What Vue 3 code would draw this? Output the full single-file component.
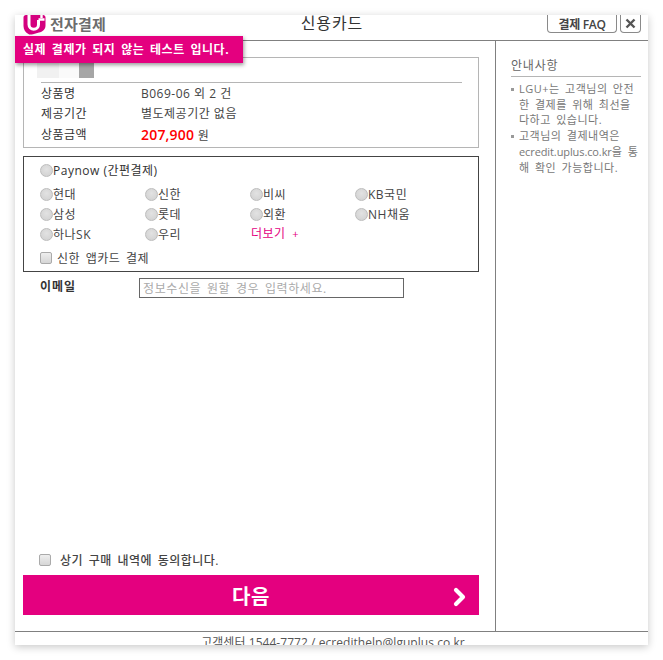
<template>
  <div class="page">
    <div class="popup">
      <header class="top">
        <div class="logo">
          <svg width="24" height="20" viewBox="0 0 24 20">
            <path d="M3 0h17c1.500 0 2.500 1 2.500 2.500v8c0 4-3 6.500-6.500 7l-6 1.800c-3 .6-4 .2-5-.6-2.500-1.500-4.500-4-4.500-7.700V2.500C.5 1 1.500 0 3 0z" fill="#d4007f" />
            <path d="M6 0v9.500c0 3 2.200 4.700 4.800 4.700s4.700-1.700 4.700-4.700V5" fill="none" stroke="#fff" stroke-width="3" />
            <path d="M15.500 4.500h6M18.500 0v3" fill="none" stroke="#fff" stroke-width="2.400" />
          </svg>
          <span>전자결제</span>
        </div>
        <h1>신용카드</h1>
        <div class="top-btns">
          <button class="faq">결제 FAQ</button>
          <button class="close">
            <svg width="11" height="11" viewBox="0 0 11 11">
              <path d="M1.500 1.500l8 8M9.500 1.500l-8 8" stroke="#555" stroke-width="2.400" />
            </svg>
          </button>
        </div>
      </header>

      <div class="notice">실제 결제가 되지 않는 테스트 입니다.</div>

      <div class="body">
        <main class="left">
          <section class="product">
            <div class="blur"><i class="b1"></i><i class="b2"></i><i class="b3"></i></div>
            <dl v-for="row in productRows" :key="row.label" class="prow">
              <dt>{{ row.label }}</dt>
              <dd>{{ row.value }}</dd>
            </dl>
            <dl class="prow">
              <dt>상품금액</dt>
              <dd><b class="price">207,900</b> 원</dd>
            </dl>
          </section>

          <section class="pay">
            <label class="paynow"><input type="radio" name="card" />Paynow (간편결제)</label>
            <div class="cards">
              <label v-for="card in cards" :key="card"><input type="radio" name="card" />{{ card }}</label>
              <a class="more">더보기 <small>+</small></a>
            </div>
            <label class="appcard"><input type="checkbox" />신한 앱카드 결제</label>
          </section>

          <div class="email">
            <label for="mail">이메일</label>
            <input id="mail" type="text" placeholder="정보수신을 원할 경우 입력하세요." />
          </div>

          <label class="agree"><input type="checkbox" />상기 구매 내역에 동의합니다.</label>

          <button class="next">
            다음
            <svg class="arrow" width="14" height="20" viewBox="0 0 14 20">
              <path d="M3 3L10 10l-7 7" fill="none" stroke="#fff" stroke-width="4.200" stroke-linecap="round" stroke-linejoin="round" />
            </svg>
          </button>
        </main>

        <aside class="side">
          <h2>안내사항</h2>
          <ul>
            <li>LGU+는 고객님의 안전한 결제를 위해 최선을 다하고 있습니다.</li>
            <li>고객님의 결제내역은 <span class="url">ecredit.uplus.co.kr</span>을 통해 확인 가능합니다.</li>
          </ul>
        </aside>
      </div>

      <footer class="bottom">고객센터 1544-7772 / ecredithelp@lguplus.co.kr</footer>
    </div>
  </div>
</template>

<script setup>
const productRows = [
  { label: '상품명', value: 'B069-06 외 2 건' },
  { label: '제공기간', value: '별도제공기간 없음' }
]

const cards = ['현대', '신한', '비씨', 'KB국민', '삼성', '롯데', '외환', 'NH채움', '하나SK', '우리']
</script>

<style>
html, body { margin: 0; background: #fff; }
</style>

<style scoped>
.page {
  width: 663px;
  height: 660px;
  padding: 15px;
  box-sizing: border-box;
  font-family: "Open Sans", "Noto Sans CJK KR", sans-serif;
  font-size: 12px;
  letter-spacing: .5px;
  word-spacing: 2px;
  color: #444;
}

.popup {
  position: relative;
  width: 633px;
  height: 630px;
  background: #fff;
  box-shadow: 0 2px 8px rgba(0, 0, 0, .22);
  overflow: hidden;
  display: flex;
  flex-direction: column;
}

.top {
  height: 25px;
  flex: none;
  display: flex;
  justify-content: space-between;
  border-bottom: 1px solid #808080;
  position: relative;
}

.logo {
  display: flex;
  align-items: flex-start;
  gap: 3px;
  padding-left: 8px;
  font-family: "Noto Sans CJK KR", sans-serif;
  font-size: 15px;
  font-weight: 700;
  letter-spacing: .2px;
  color: #6d6d6d;
  line-height: 18px;
}

.top h1 {
  position: absolute;
  left: 1px;
  right: 0;
  top: 0;
  margin: 0;
  text-align: center;
  font-size: 16px;
  font-weight: 400;
  line-height: 17px;
  color: #333;
  letter-spacing: .9px;
}

.top-btns {
  display: flex;
  gap: 3px;
  padding-right: 7px;
  height: 18px;
  position: relative;
}

.top-btns button {
  height: 18px;
  padding: 0;
  background: #fff;
  border: 1px solid #8a8a8a;
  border-top: 0;
  border-radius: 0 0 4px 4px;
  font-family: inherit;
  color: #444;
}

.faq {
  width: 70px;
  font-size: 12px;
  font-weight: 600;
  letter-spacing: -.3px;
  word-spacing: 0;
}

.close {
  width: 21px;
  display: flex;
  align-items: center;
  justify-content: center;
}

.notice {
  position: absolute;
  left: 0;
  top: 21px;
  width: 228px;
  height: 27px;
  box-sizing: border-box;
  padding-left: 8px;
  background: #e4007f;
  color: #fff;
  font-size: 12px;
  font-weight: 700;
  line-height: 27px;
  letter-spacing: .55px;
  box-shadow: 1px 2px 4px rgba(0, 0, 0, .4);
  z-index: 2;
}

.body {
  flex: none;
  height: 591px;
  display: flex;
  border-bottom: 1px solid #808080;
  box-sizing: border-box;
}

.left {
  width: 481px;
  box-sizing: border-box;
  border-right: 1px solid #808080;
  padding: 16px 16px 0 8px;
  display: flex;
  flex-direction: column;
}

.product {
  height: 91px;
  box-sizing: border-box;
  border: 1px solid #b5b5b5;
  padding: 4px 16px 0 17px;
}

.blur {
  display: flex;
  height: 20px;
  margin-left: -4px;
}

.blur i { display: block; height: 16px; }
.b1 { width: 22px; background: #f1f1f1; }
.b2 { width: 20px; background: #fafafa; }
.b3 { width: 15px; background: #a6a6a6; }

.product .blur + .prow {
  border-top: 1px solid #b5b5b5;
  margin-top: 0;
  height: 20px;
}

.prow {
  display: flex;
  margin: 0;
  height: 21px;
  line-height: 21px;
}

.prow dt { width: 100px; color: #333; }
.prow dd { margin: 0; word-spacing: 0; }

.price {
  color: #f00;
  font-size: 14px;
  font-weight: 600;
  letter-spacing: .2px;
}

.pay {
  margin-top: 8px;
  height: 116px;
  box-sizing: border-box;
  border: 1px solid #444;
  padding: 4px 0 0 16px;
}

.pay input[type="radio"] {
  appearance: none;
  width: 13px;
  height: 13px;
  margin: 0;
  border-radius: 50%;
  border: 1px solid #bdbdbd;
  background: radial-gradient(circle at 50% 40%, #e2e2e2, #cfcfcf);
  flex: none;
}

.paynow,
.cards label,
.appcard,
.agree {
  display: flex;
  align-items: center;
}

.paynow {
  height: 18px;
  color: #333;
  word-spacing: 0;
}

.cards {
  display: grid;
  grid-template-columns: repeat(4, 105px);
  grid-auto-rows: 20px;
  margin-top: 5px;
}

.more {
  color: #e4007f;
  padding-left: 1px;
  line-height: 20px;
  word-spacing: 0;
}

.more small {
  font-size: 11px;
  margin-left: 3px;
}

input[type="checkbox"] {
  appearance: none;
  width: 12px;
  height: 12px;
  margin: 0;
  border: 1px solid #aaa;
  border-radius: 2px;
  background: linear-gradient(#eee, #d6d6d6);
  flex: none;
}

.appcard {
  gap: 5px;
  margin-top: 4px;
  height: 20px;
}

.email {
  display: flex;
  align-items: flex-start;
  margin-top: 6px;
  padding-left: 17px;
}

.email label {
  width: 99px;
  font-weight: 600;
  color: #333;
  line-height: 17px;
  letter-spacing: .9px;
}

.email input {
  width: 265px;
  height: 20px;
  box-sizing: border-box;
  border: 1px solid #666;
  padding: 0 3px;
  font-family: inherit;
  font-size: 12px;
  letter-spacing: .6px;
  word-spacing: 2px;
  outline: none;
}

.email input::placeholder { color: #aaa; }

.agree {
  margin-top: auto;
  gap: 9px;
  padding-left: 16px;
  height: 18px;
  font-weight: 500;
  color: #444;
}

.next {
  position: relative;
  margin: 6px 0 16px;
  height: 40px;
  flex: none;
  border: 0;
  padding: 0;
  background: #e4007f;
  color: #fff;
  font-family: inherit;
  font-size: 20px;
  font-weight: 700;
  letter-spacing: .5px;
}

.arrow {
  position: absolute;
  right: 12px;
  top: 12px;
}

.side {
  flex: 1;
  padding: 17px 7px 0 15px;
}

.side h2 {
  margin: 0;
  padding-bottom: 2px;
  font-size: 12px;
  font-weight: 400;
  line-height: 16px;
  color: #666;
  letter-spacing: .8px;
  border-bottom: 1px solid #b5b5b5;
}

.side ul {
  list-style: none;
  margin: 4px 0 0;
  padding: 0;
  font-size: 11px;
  line-height: 15.700px;
  color: #777;
  word-break: break-all;
}

.side li {
  position: relative;
  padding-left: 8px;
}

.side li::before {
  content: "";
  position: absolute;
  left: 0;
  top: 7px;
  width: 3px;
  height: 3px;
  background: #999;
}

.url {
  white-space: nowrap;
  letter-spacing: -.1px;
}

.bottom {
  text-align: center;
  line-height: 18px;
  color: #555;
  letter-spacing: .05px;
  word-spacing: 0;
  padding: 2px 0 0 3px;
}
</style>
